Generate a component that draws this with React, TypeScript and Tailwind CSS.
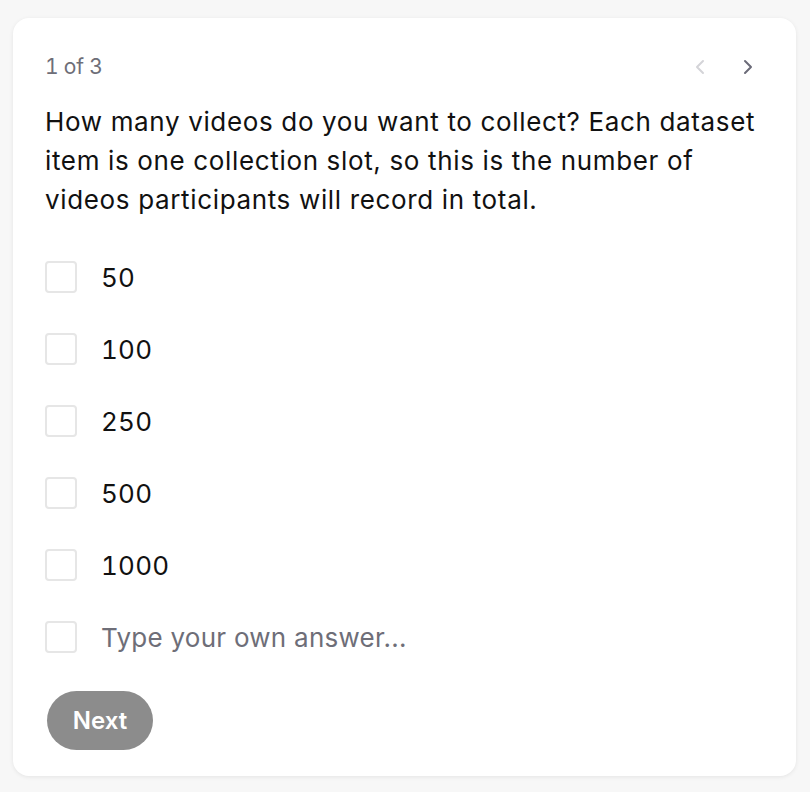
import { ChevronLeft, ChevronRight } from "lucide-react";

const OPTIONS = ["50", "100", "250", "500", "1000"];

export default function App() {
  return (
    <div
      className="min-h-[792px] w-full bg-[#f7f7f7] px-[13px] pt-[18px] pb-[14px]"
      style={{ fontFamily: "Inter, 'Noto Sans', sans-serif" }}
    >
      <div className="w-[783px] rounded-[16px] bg-white px-[32px] pt-[36px] pb-[26px] shadow-[0_1px_4px_rgba(0,0,0,0.08)]">
        <div className="flex h-[26px] items-center justify-between">
          <span className="text-[21px] tabular-nums tracking-[-0.01em] text-[#6e6e78]">1 of 3</span>
          <div className="mr-[4px] flex items-center gap-[24px]">
            <ChevronLeft className="h-[24px] w-[24px] text-[#d4d4d8]" strokeWidth={2} />
            <ChevronRight className="h-[24px] w-[24px] text-[#6b6b78]" strokeWidth={2} />
          </div>
        </div>

        <p className="mt-[22px] text-[26px] leading-[39px] tracking-[0.025em] text-[#111111]">
          How many videos do you want to collect? Each dataset item is one collection slot, so this is the number of
          videos participants will record in total.
        </p>

        <ul className="mt-[22px] flex flex-col">
          {OPTIONS.map((opt) => (
            <li key={opt} className="flex h-[72px] items-center gap-[24px]">
              <span className="h-[32px] w-[32px] rounded-[4px] border-2 border-[#e6e6e6] bg-white" />
              <span className="text-[26px] tabular-nums tracking-[0.01em] text-[#111111]">{opt}</span>
            </li>
          ))}
          <li className="flex h-[72px] items-center gap-[24px]">
            <span className="h-[32px] w-[32px] rounded-[4px] border-2 border-[#e6e6e6] bg-white" />
            <span className="text-[26px] tracking-[0.01em] text-[#6e6e78]">Type your own answer...</span>
          </li>
        </ul>

        <button className="mt-[18px] ml-[2px] h-[59px] w-[106px] rounded-full bg-[#8c8c8c] text-[24px] font-semibold text-white">
          Next
        </button>
      </div>
    </div>
  );
}
